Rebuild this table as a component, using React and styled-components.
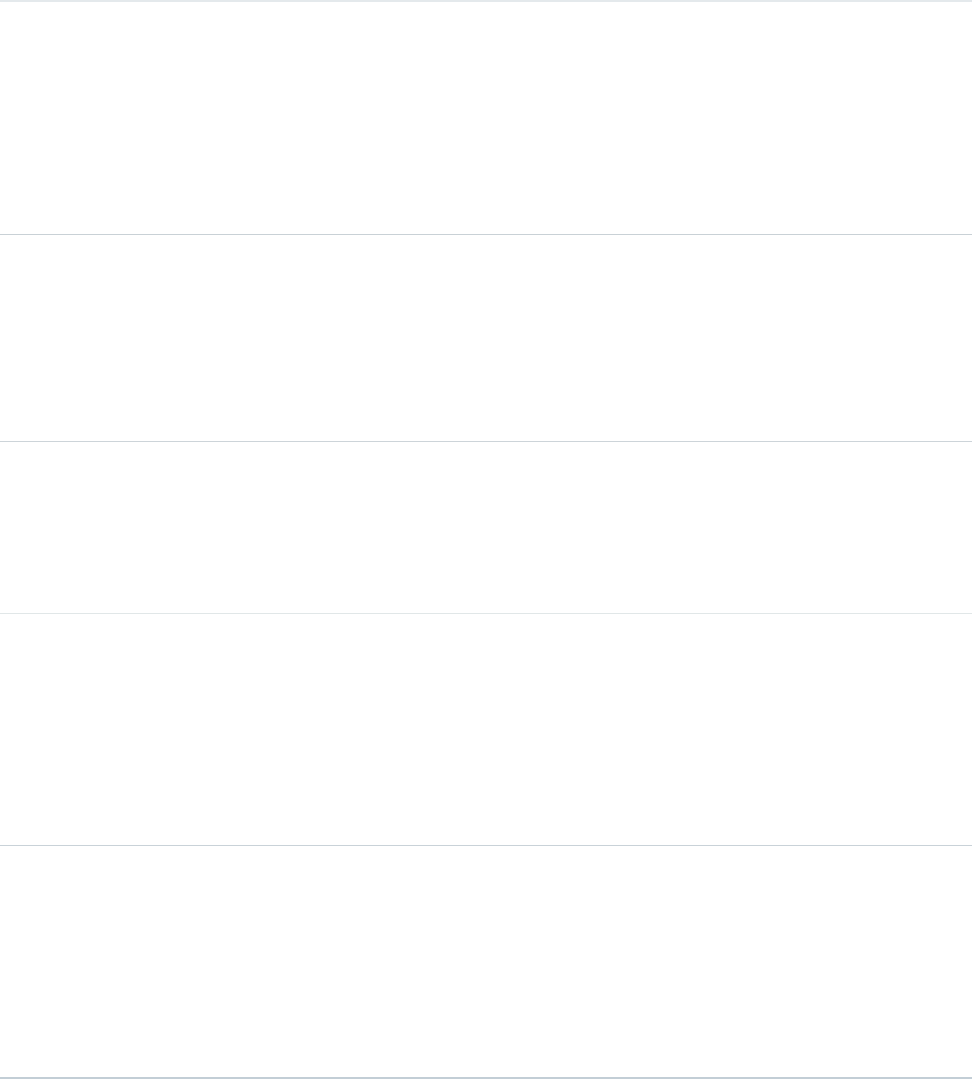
import React from "react";
import styled, { createGlobalStyle } from "styled-components";

const Global = createGlobalStyle`
  html, body { margin: 0; padding: 0; background: #ffffff; }
  body { font-family: "Liberation Sans", Arial, sans-serif; }
`;

const Page = styled.div`
  width: 972px;
  display: flex;
  flex-direction: column;
  border-top: 2px solid #e4e9ec;
  border-bottom: 2px solid #c3ced6;
`;

const Section = styled.section`
  box-sizing: border-box;
  height: ${(p) => p.$h}px;
  border-top: ${(p) => (p.$line ? `1px solid ${p.$line}` : "none")};
  background: #ffffff;
`;

const sections = [
  { h: 232, line: null },
  { h: 207, line: "#c9d1d6" },
  { h: 172, line: "#cdd4d9" },
  { h: 232, line: "#e1e7e8" },
  { h: 232, line: "#c9d2d8" },
];

export default function App() {
  return (
    <>
      <Global />
      <Page>
        {sections.map((s, i) => (
          <Section key={i} $h={s.h} $line={s.line} />
        ))}
      </Page>
    </>
  );
}
